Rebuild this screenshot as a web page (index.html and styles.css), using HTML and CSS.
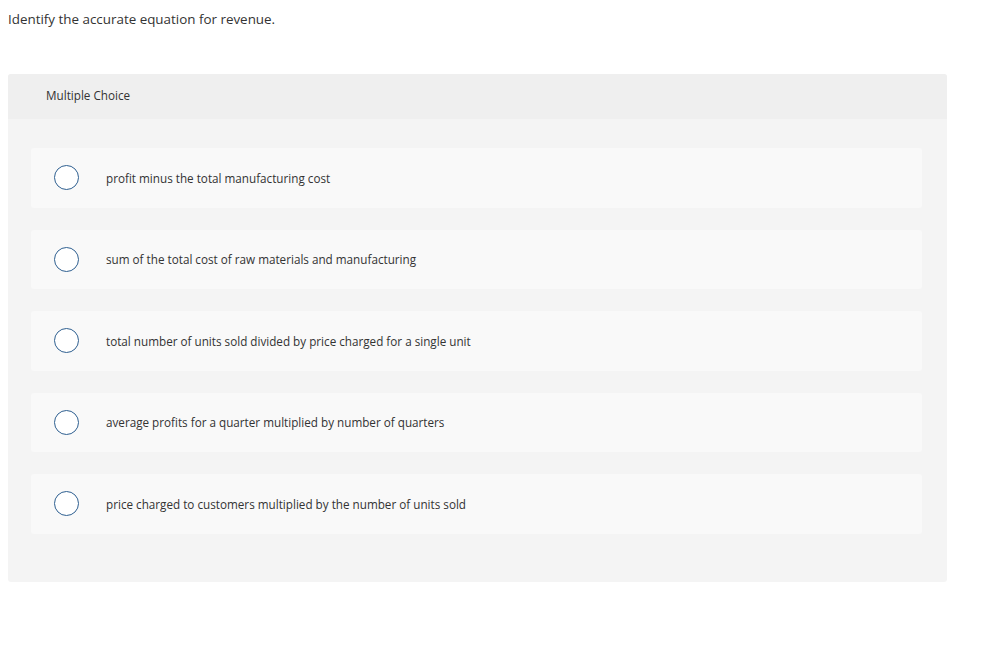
FILE: index.html
```html
<!DOCTYPE html>
<html>
<head>
<meta charset="utf-8">
<link rel="stylesheet" href="styles.css">
</head>
<body>
<p class="prompt">Identify the accurate equation for revenue.</p>
<div class="question">
  <div class="q-header">Multiple Choice</div>
  <div class="q-body">
    <div class="option"><span class="radio"></span><span class="label">profit minus the total manufacturing cost</span></div>
    <div class="option"><span class="radio"></span><span class="label">sum of the total cost of raw materials and manufacturing</span></div>
    <div class="option"><span class="radio"></span><span class="label">total number of units sold divided by price charged for a single unit</span></div>
    <div class="option"><span class="radio"></span><span class="label">average profits for a quarter multiplied by number of quarters</span></div>
    <div class="option"><span class="radio"></span><span class="label">price charged to customers multiplied by the number of units sold</span></div>
  </div>
</div>
</body>
</html>
```

FILE: styles.css
```css
html, body {
  margin: 0;
  padding: 0;
  background: #ffffff;
}
body {
  padding: 0 8px;
  font-family: "Open Sans", "Liberation Sans", sans-serif;
  color: #333333;
}
.prompt {
  margin: 0;
  padding-top: 10px;
  height: 74px;
  box-sizing: border-box;
  font-size: 13.4px;
  line-height: 18px;
  color: #333333;
}
.question {
  width: 939px;
  background: #f4f4f4;
  border-radius: 3px;
  overflow: hidden;
}
.q-header {
  height: 45px;
  box-sizing: border-box;
  padding-bottom: 3px;
  background: #efefef;
  padding-left: 38px;
  display: flex;
  align-items: center;
  font-size: 11.7px;
  color: #333333;
}
.q-body {
  padding: 29px 25px 48px 23px;
  display: flex;
  flex-direction: column;
  gap: 22px;
}
.option {
  height: 59.5px;
  background: #f9f9f9;
  border-radius: 3px;
  display: flex;
  align-items: center;
  padding-left: 23px;
}
.radio {
  width: 23px;
  height: 23px;
  border: 1.6px solid #2e5f90;
  border-radius: 50%;
  background: #ffffff;
  flex: none;
}
.label {
  margin-left: 27px;
  font-size: 11.7px;
  color: #333333;
}
```
